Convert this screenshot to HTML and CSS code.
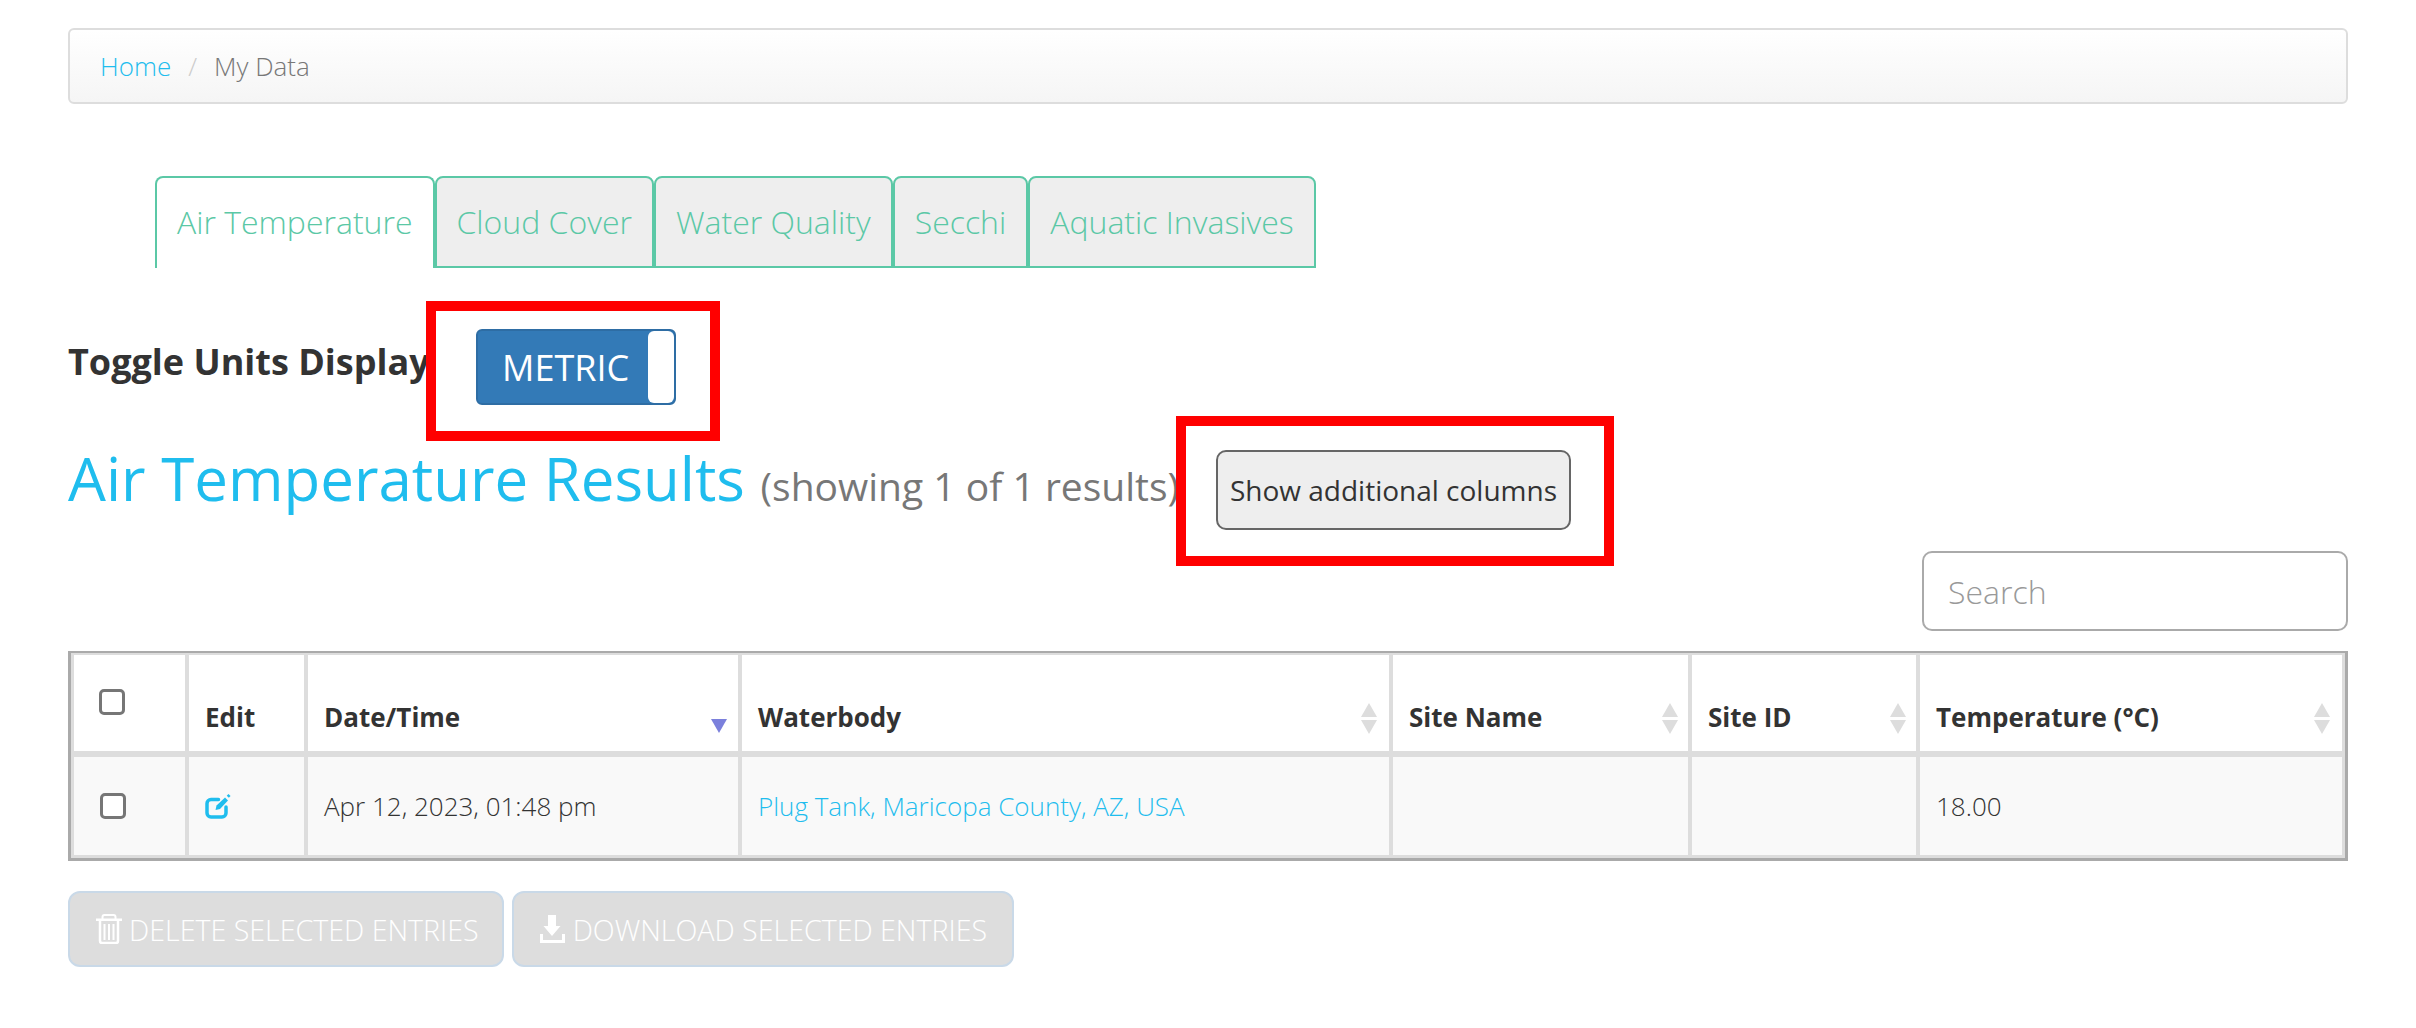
FILE: index.html
```html
<!DOCTYPE html>
<html lang="en">
<head>
<meta charset="utf-8">
<title>My Data</title>
<link rel="stylesheet" href="styles.css">
</head>
<body>
<nav class="breadcrumb"><a href="#">Home</a><span class="sep">/</span><span class="current">My Data</span></nav>
<ul class="tabs">
  <li class="tab active">Air Temperature</li>
  <li class="tab">Cloud Cover</li>
  <li class="tab">Water Quality</li>
  <li class="tab">Secchi</li>
  <li class="tab">Aquatic Invasives</li>
</ul>
<div class="units">
  <strong class="units-label">Toggle Units Display</strong>
  <div class="toggle annotated annotated-toggle"><span class="toggle-on">METRIC</span><span class="toggle-handle"></span></div>
</div>
<div class="title-row">
  <h2 class="title">Air Temperature Results <small>(showing 1 of 1 results)</small></h2>
  <button class="columns-btn annotated annotated-columns" type="button">Show additional columns</button>
</div>
<div class="search-row"><input class="search" type="text" placeholder="Search"></div>
<div class="table-wrap">
<table class="results">
  <thead>
    <tr>
      <th class="c-check"><input class="check check-head" type="checkbox"></th>
      <th class="c-edit">Edit</th>
      <th class="c-date sort-desc">Date/Time</th>
      <th class="c-water sort">Waterbody</th>
      <th class="c-name sort">Site Name</th>
      <th class="c-id sort">Site ID</th>
      <th class="c-temp sort">Temperature (°C)</th>
    </tr>
  </thead>
  <tbody>
    <tr>
      <td><input class="check check-row" type="checkbox"></td>
      <td><a class="edit" href="#" aria-label="Edit"><svg viewBox="0 0 26 26" width="26" height="26"><path d="M13.500 6.500H6a4 4 0 0 0-4 4V20a4 4 0 0 0 4 4h11a4 4 0 0 0 4-4v-6" fill="none" stroke="#1fbdee" stroke-width="3.500" stroke-linecap="round"/><path d="M10.500 17l1-4.500L20 4.500l3 3-8 8.500z" fill="#1fbdee"/><path d="M22.800 3.700L24.500 2" fill="none" stroke="#1fbdee" stroke-width="3"/></svg></a></td>
      <td>Apr 12, 2023, 01:48 pm</td>
      <td><a href="#">Plug Tank, Maricopa County, AZ, USA</a></td>
      <td></td>
      <td></td>
      <td>18.00</td>
    </tr>
  </tbody>
</table>
</div>
<div class="actions">
  <button class="action action-delete" type="button" disabled><svg class="icon-trash" viewBox="0 0 26 30" width="26" height="30"><path d="M6.500 5V3a2 2 0 0 1 2-2h9a2 2 0 0 1 2 2v2" fill="none" stroke="#fff" stroke-width="2"/><path d="M0 4.500h26v2.500H0z" fill="#fff"/><path d="M4 7v20a2 2 0 0 0 2 2h14a2 2 0 0 0 2-2V7" fill="none" stroke="#fff" stroke-width="2.500"/><path d="M8.500 10v16M13 10v16M17.500 10v16" fill="none" stroke="#fff" stroke-width="2"/></svg>DELETE SELECTED ENTRIES</button>
  <button class="action action-download" type="button" disabled><svg class="icon-download" viewBox="0 0 25 28" width="25" height="28"><path d="M8 0h8v11h4.500L12 21 3.500 11H8z" fill="#fff"/><path d="M0 19h3v6h19v-6h3v9H0z" fill="#fff"/></svg>DOWNLOAD SELECTED ENTRIES</button>
</div>
</body>
</html>
```
FILE: styles.css
```css
* { box-sizing: border-box; }
html, body { margin: 0; background: #fff; }
body {
  padding: 28px 68px 0;
  font-family: "Open Sans", "Liberation Sans", sans-serif;
  font-size: 26px;
  font-weight: 300;
  color: #333;
}
a { color: #1fbdee; text-decoration: none; }

.breadcrumb {
  display: flex;
  align-items: center;
  height: 76px;
  padding: 0 30px;
  border: 2px solid #ddd;
  border-radius: 6px;
  background: linear-gradient(#fff, #f5f5f5);
  color: #777;
}
.sep { margin: 0 17px; color: #ccc; }

.tabs {
  display: flex;
  list-style: none;
  margin: 72px 0 0 87px;
  padding: 0;
}
.tab {
  display: flex;
  align-items: center;
  height: 92px;
  padding: 0 20px 2px;
  border: 2px solid #5bc8a6;
  border-radius: 8px 8px 0 0;
  background: #eee;
  color: #5bc8a6;
  font-size: 32px;
}
.tab.active { background: #fff; border-bottom: 0; padding-bottom: 4px; }

.units {
  display: flex;
  align-items: center;
  margin-top: 61px;
  height: 76px;
}
.units-label {
  width: 408px;
  margin-bottom: 12px;
  font-size: 36px;
  font-weight: 700;
}
.toggle {
  display: flex;
  align-items: center;
  justify-content: space-between;
  width: 200px;
  height: 76px;
  padding: 0 0 0 24px;
  border: 2px solid #2e6da4;
  border-radius: 6px;
  background: #337ab7;
  color: #fff;
  font-size: 36px;
  font-weight: 400;
}
.toggle-handle {
  width: 26px;
  height: 72px;
  border-radius: 6px;
  background: #fff;
}
.annotated { position: relative; }
.annotated::after {
  content: "";
  position: absolute;
  border: 10px solid #f00;
  pointer-events: none;
}
.annotated-toggle::after { inset: -30px -46px -38px -52px; }
.annotated-columns::after { inset: -36px -45px -38px -42px; }

.title-row {
  display: flex;
  align-items: flex-start;
  margin-top: 45px;
  height: 80px;
}
.title {
  flex: 0 0 1148px;
  margin: -13px 0 0;
  font-size: 60px;
  font-weight: 400;
  color: #1fbdee;
  white-space: nowrap;
}
.title small { font-size: 39px; font-weight: 400; color: #777; }
.columns-btn {
  width: 355px;
  height: 80px;
  padding: 0;
  border: 2px solid #666;
  border-radius: 10px;
  background: #eee;
  color: #333;
  font: 400 28px "Open Sans", sans-serif;
}

.search-row { display: flex; justify-content: flex-end; margin-top: 21px; }
.search {
  width: 426px;
  height: 80px;
  padding: 0 24px;
  border: 2px solid #aaa;
  border-radius: 10px;
  font: 300 32px "Open Sans", sans-serif;
  color: #333;
}
.search::placeholder { color: #999; opacity: 1; }

.table-wrap {
  margin-top: 20px;
  padding: 2px 3px 3px;
  border: 3px solid #aaa;
  border-width: 2px 3px 3px;
  background: #ddd;
}
.results {
  width: 100%;
  table-layout: fixed;
  border-collapse: separate;
  border-spacing: 0;
}
.results th, .results td {
  border-right: 4px solid #ddd;
  padding: 0 16px;
  text-align: left;
}
.results th:last-child, .results td:last-child { border-right: 0; }
.results th {
  position: relative;
  height: 102px;
  border-bottom: 6px solid #ddd;
  padding-top: 28px;
  background: #fff;
  font-size: 26px;
  font-weight: 700;
}
.results td { height: 98px; background: #f9f9f9; }
.c-check { width: 115px; }
.c-edit { width: 119px; }
.c-date { width: 434px; }
.c-water { width: 651px; }
.c-name { width: 299px; }
.c-id { width: 228px; }

.sort::before, .sort::after, .sort-desc::after {
  content: "";
  position: absolute;
  right: 12px;
  width: 0;
  height: 0;
  border-left: 8px solid transparent;
  border-right: 8px solid transparent;
}
.sort-desc::after { right: 11px; }
.c-name::before, .c-name::after, .c-id::before, .c-id::after { right: 10px; }
.sort::before { top: 48px; border-bottom: 14px solid #ddd; }
.sort::after { top: 65px; border-top: 14px solid #ddd; }
.sort-desc::after { top: 64px; border-top: 14px solid #7b80dc; }

.check {
  appearance: none;
  display: block;
  width: 26px;
  height: 26px;
  margin: 0;
  border: 3px solid #767676;
  border-radius: 5px;
  background: #fff;
}
.check-head { margin: -28px 0 0 9px; }
.check-row { margin-left: 10px; }
.edit { display: block; height: 26px; }
.edit svg { display: block; }

.actions { display: flex; gap: 8px; margin-top: 30px; }
.action {
  display: flex;
  align-items: center;
  height: 76px;
  padding: 0 24px 0 26px;
  border: 2px solid #c9d9e8;
  border-radius: 12px;
  background: #ddd;
  color: #fff;
  font: 300 28.600px "Open Sans", sans-serif;
}
.action-delete { padding-right: 23px; }
.action-download { padding-right: 25px; }
.icon-trash { margin-right: 7px; }
.icon-download { margin-right: 8px; }
```
